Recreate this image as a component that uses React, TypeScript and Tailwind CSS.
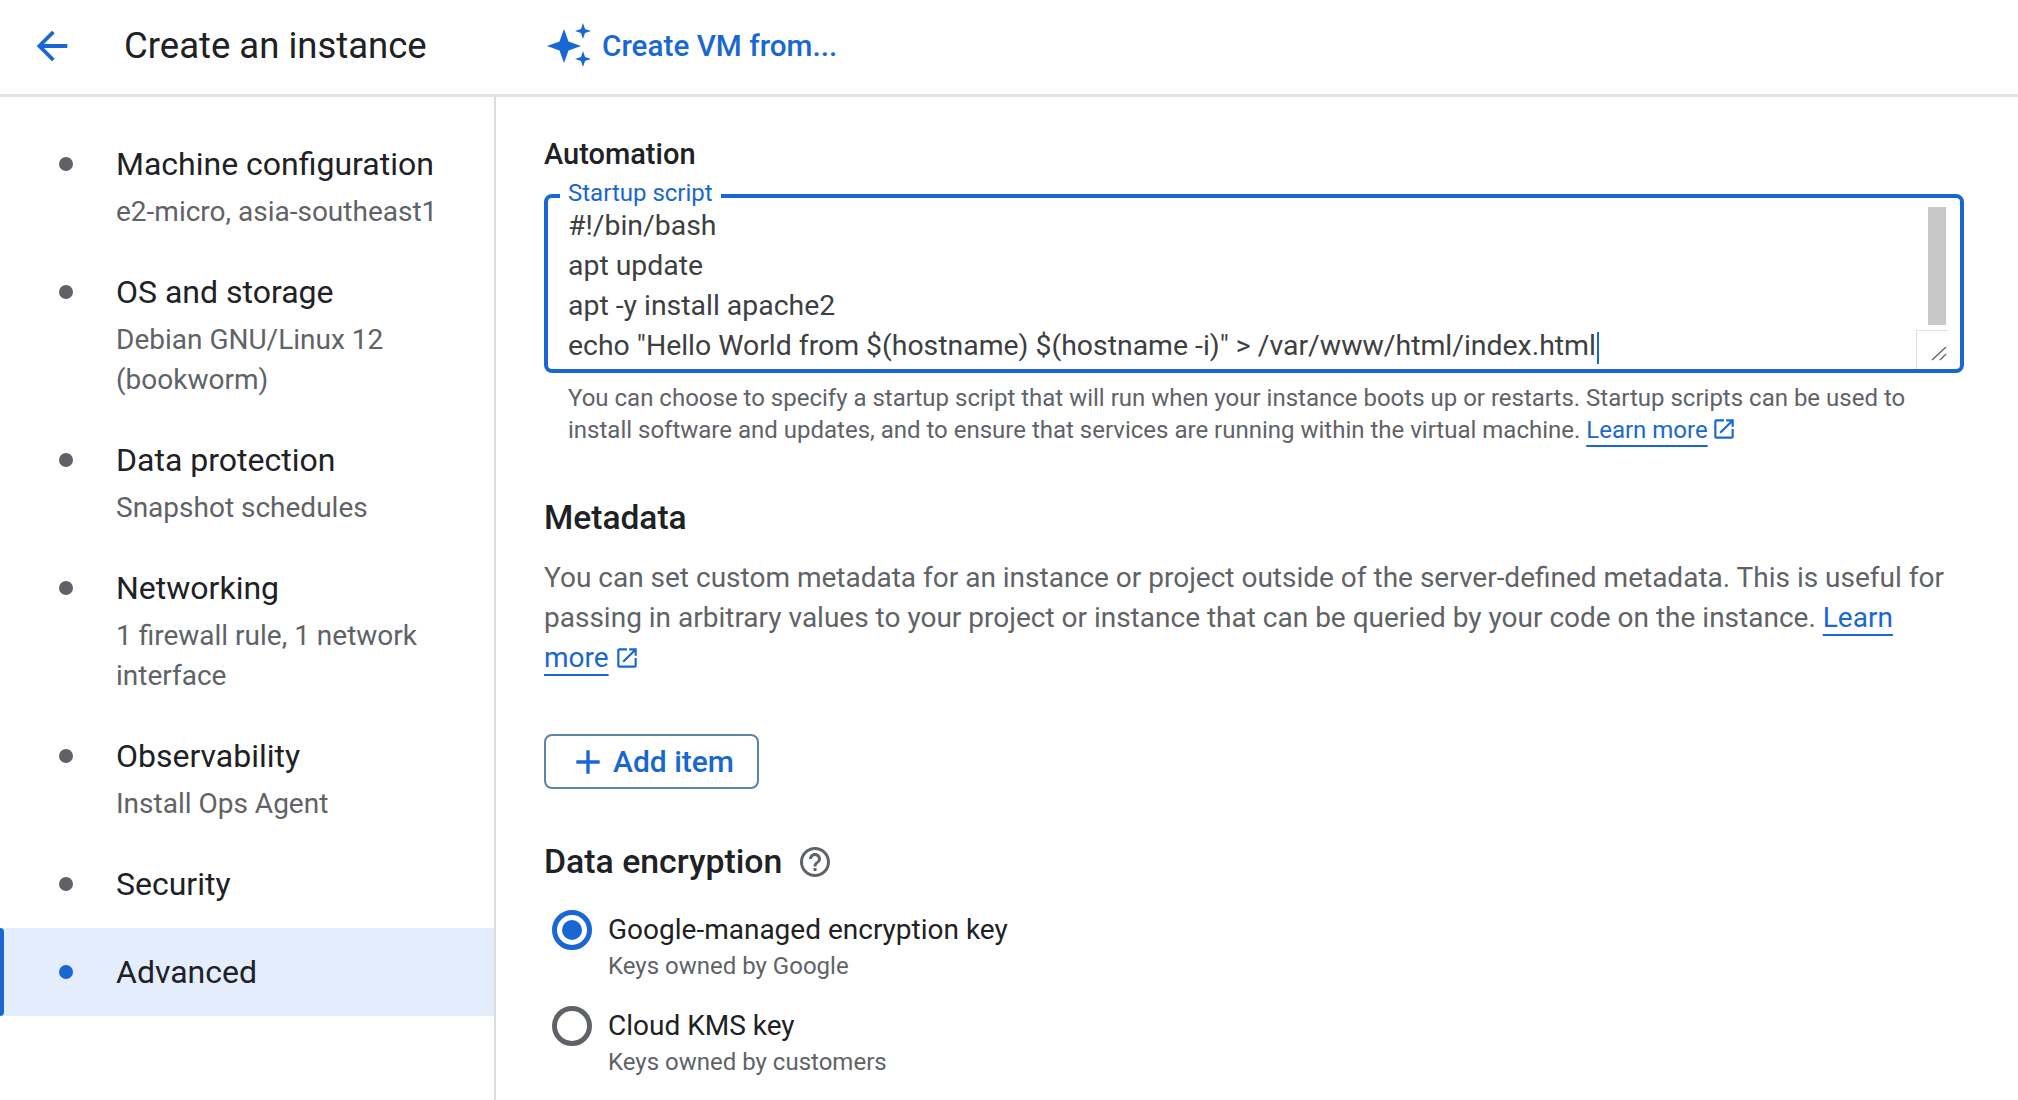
import React from 'react';

const navItems = [
  { title: 'Machine configuration', sub: ['e2-micro, asia-southeast1'] },
  { title: 'OS and storage', sub: ['Debian GNU/Linux 12', '(bookworm)'] },
  { title: 'Data protection', sub: ['Snapshot schedules'] },
  { title: 'Networking', sub: ['1 firewall rule, 1 network', 'interface'] },
  { title: 'Observability', sub: ['Install Ops Agent'] },
  { title: 'Security', sub: [] },
  { title: 'Advanced', sub: [], active: true },
];

const scriptLines = [
  '#!/bin/bash',
  'apt update',
  'apt -y install apache2',
  'echo "Hello World from $(hostname) $(hostname -i)" > /var/www/html/index.html',
];

const ExternalLink = ({ className }: { className: string }) => (
  <svg viewBox="0 0 24 24" className={className} fill="currentColor">
    <path d="M19 19H5V5h7V3H5a2 2 0 0 0-2 2v14a2 2 0 0 0 2 2h14a2 2 0 0 0 2-2v-7h-2v7zM14 3v2h3.59l-9.83 9.83 1.41 1.41L19 6.41V10h2V3h-7z" />
  </svg>
);

const linkClass = 'text-[#1967d2] underline decoration-2 underline-offset-[7px]';

const App = () => {
  return (
    <div className="h-[1100px] w-[2018px] overflow-hidden bg-white font-['Roboto',sans-serif] text-[#202124]">
      {/* Header */}
      <header className="flex h-[97px] items-center border-b-[3px] border-[#e3e3e3] pb-[2px]">
        <svg viewBox="0 0 24 24" className="ml-[29px] h-[46px] w-[46px] text-[#1967d2]" fill="currentColor">
          <path d="M20 11H7.83l5.59-5.59L12 4l-8 8 8 8 1.41-1.41L7.83 13H20v-2z" />
        </svg>
        <h1 className="ml-[49px] w-[420px] text-[36.500px] leading-[48px]">Create an instance</h1>
        <svg viewBox="0 0 50 50" className="h-[50px] w-[50px] text-[#1967d2]" fill="currentColor">
          <path d="M20 8L24.500 20.500L37 25L24.500 29.500L20 42L15.500 29.500L3 25L15.500 20.500z" />
          <path d="M39 2L41 8L47 10L41 12L39 18L37 12L31 10L37 8z" />
          <path d="M39 30L41 36L47 38L41 40L39 46L37 40L31 38L37 36z" />
        </svg>
        <span className="ml-[8px] text-[29.700px] font-medium text-[#1967d2]">Create VM from...</span>
      </header>

      <div className="flex h-[1003px]">
        {/* Sidebar */}
        <nav className="w-[496px] shrink-0 border-r-2 border-[#dcdcdc] pt-[23px]">
          {navItems.map((item) => (
            <div
              key={item.title}
              className={`relative flex pl-[59px] pt-[20px] ${item.sub.length ? 'pb-[16px]' : 'pb-[20px]'} ${item.active ? 'bg-[#e3edfc]' : ''}`}
            >
              {item.active && <div className="absolute left-0 top-0 h-full w-[4px] rounded-r bg-[#1967d2]" />}
              <span className={`mt-[17px] h-[14px] w-[14px] shrink-0 rounded-full ${item.active ? 'bg-[#1967d2]' : 'bg-[#5f6368]'}`} />
              <div className="ml-[43px]">
                <div className="text-[32px] leading-[48px]">{item.title}</div>
                <div className={item.sub.length ? 'mt-[4px]' : ''}>
                  {item.sub.map((line) => (
                    <div key={line} className="text-[28px] leading-[40px] text-[#5f6368]">{line}</div>
                  ))}
                </div>
              </div>
            </div>
          ))}
        </nav>

        {/* Content */}
        <main className="flex-1 pl-[48px] pr-[54px]">
          <h2 className="mt-[37px] text-[29px] font-medium leading-[40px]">Automation</h2>

          <div className="relative mt-[20px] h-[179px] rounded-[8px] border-[4px] border-[#1967d2] pl-[20px] pt-[8px]">
            <span className="absolute -top-[21px] left-[12px] bg-white px-[8px] text-[24px] leading-[32px] text-[#1967d2]">Startup script</span>
            {scriptLines.map((line, i) => (
              <div key={line} className="text-[28.400px] leading-[40px] text-[#3c4043]">
                {line}
                {i === scriptLines.length - 1 && <span className="ml-[1px] inline-block h-[32px] w-[2px] align-middle bg-[#1967d2]" />}
              </div>
            ))}
            {/* Scrollbar and resize handle */}
            <div className="absolute right-[14px] top-[9px] h-[118px] w-[18px] bg-[#c8c8c8]" />
            <div className="absolute bottom-0 right-[12px] h-[39px] w-[32px] border-l border-t border-[#e0e0e0]">
              <svg viewBox="0 0 16 16" className="absolute bottom-[8px] right-[1px] h-[16px] w-[16px] text-[#5f6368]" stroke="currentColor" strokeWidth="1.300">
                <path d="M1 15L15 2M9 15l6-6" />
              </svg>
            </div>
          </div>

          <p className="mt-[9px] pl-[24px] text-[24px] leading-[32px] text-[#5f6368]">
            You can choose to specify a startup script that will run when your instance boots up or restarts. Startup scripts can be used to
            <br />
            install software and updates, and to ensure that services are running within the virtual machine.{' '}
            <span className={linkClass}>Learn more</span>
            <ExternalLink className="ml-[3px] inline-block h-[26px] w-[26px] align-[-4px] text-[#1967d2]" />
          </p>

          <h2 className="mt-[48px] text-[33.500px] font-medium leading-[48px]">Metadata</h2>

          <p className="mt-[16px] text-[28px] leading-[40px] text-[#5f6368]">
            You can set custom metadata for an instance or project outside of the server-defined metadata. This is useful for
            <br />
            passing in arbitrary values to your project or instance that can be queried by your code on the instance.{' '}
            <span className={linkClass}>Learn</span>
            <br />
            <span className={linkClass}>more</span>
            <ExternalLink className="ml-[5px] inline-block h-[26px] w-[26px] align-[-4px] text-[#1967d2]" />
          </p>

          <button className="mt-[56px] flex h-[55px] w-[215px] items-center gap-[5px] rounded-[8px] border-2 border-[#5f82ad] pl-[22px] text-[#1967d2]">
            <svg viewBox="0 0 24 24" className="h-[40px] w-[40px]" fill="currentColor">
              <path d="M19 13h-6v6h-2v-6H5v-2h6V5h2v6h6v2z" />
            </svg>
            <span className="text-[30px] font-medium">Add item</span>
          </button>

          <div className="mt-[49px] flex items-center">
            <h2 className="text-[33.800px] font-medium leading-[48px]">Data encryption</h2>
            <svg viewBox="0 0 24 24" className="ml-[15px] h-[36px] w-[36px] text-[#5f6368]" fill="currentColor">
              <path d="M11 18h2v-2h-2v2zm1-16C6.480 2 2 6.480 2 12s4.480 10 10 10 10-4.480 10-10S17.520 2 12 2zm0 18c-4.410 0-8-3.590-8-8s3.590-8 8-8 8 3.590 8 8-3.590 8-8 8zm0-14c-2.210 0-4 1.790-4 4h2c0-1.100.9-2 2-2s2 .9 2 2c0 2-3 1.750-3 5h2c0-2.250 3-2.500 3-5 0-2.210-1.790-4-4-4z" />
            </svg>
          </div>

          <div className="mt-[21px] flex flex-col gap-[21px] pl-[8px]">
            <div className="flex">
              <span className="mt-[3px] flex h-[40px] w-[40px] shrink-0 items-center justify-center rounded-full border-[5px] border-[#1967d2]">
                <span className="h-[20px] w-[20px] rounded-full bg-[#1967d2]" />
              </span>
              <div className="ml-[16px]">
                <div className="text-[28px] leading-[46px]">Google-managed encryption key</div>
                <div className="-mt-[3px] text-[24px] leading-[32px] text-[#5f6368]">Keys owned by Google</div>
              </div>
            </div>
            <div className="flex">
              <span className="mt-[3px] h-[40px] w-[40px] shrink-0 rounded-full border-[5px] border-[#5f6368]" />
              <div className="ml-[16px]">
                <div className="text-[28px] leading-[46px]">Cloud KMS key</div>
                <div className="-mt-[3px] text-[24px] leading-[32px] text-[#5f6368]">Keys owned by customers</div>
              </div>
            </div>
          </div>
        </main>
      </div>
    </div>
  );
};

export default App;
